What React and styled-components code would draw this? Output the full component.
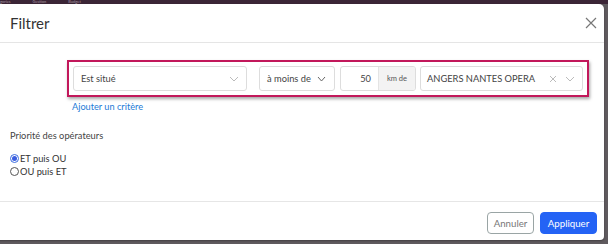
import React from "react";
import styled, { createGlobalStyle } from "styled-components";

const Global = createGlobalStyle`
  html, body { margin: 0; padding: 0; }
  body {
    width: 608px; height: 244px; overflow: hidden;
    background: #5f5a5e;
    font-family: Lato, "Open Sans", sans-serif;
  }
`;

const Page = styled.div`
  display: flex;
  flex-direction: column;
  height: 244px;
`;

const TopBar = styled.div`
  height: 4px;
  background: #3b2536;
  display: flex;
  gap: 22px;
  overflow: hidden;
  font-size: 4px;
  line-height: 4px;
  color: #a897a3;
`;

const Modal = styled.div`
  margin-left: -8px;
  width: 612px;
  height: 236px;
  background: #fff;
  border-radius: 0 5px 4px 0;
  display: flex;
  flex-direction: column;
  box-shadow: 0 1px 2px rgba(0, 0, 0, 0.3);
`;

const Header = styled.div`
  height: 38px;
  display: flex;
  align-items: center;
  justify-content: space-between;
  padding: 0 5px 0 18px;
  border-bottom: 1px solid #e5e5e5;
`;

const Title = styled.div`
  font-size: 15px;
  color: #333;
`;

const Close = styled.button`
  border: 0;
  background: none;
  padding: 0;
  width: 16px;
  height: 16px;
  display: flex;
  cursor: pointer;
`;

const Body = styled.div`
  flex: 1;
  padding: 17px 0 0 18px;
  display: flex;
  flex-direction: column;
`;

const Criteria = styled.div`
  margin-left: 57px;
  width: 522px;
  height: 37px;
  box-sizing: border-box;
  border: 2px solid #c2185b;
  box-shadow: 1px 2px 3px rgba(0, 0, 0, 0.35);
  display: flex;
  align-items: center;
  padding: 0 4px;
`;

const Select = styled.div`
  height: 25px;
  box-sizing: border-box;
  width: ${p => p.w}px;
  margin-left: ${p => p.ml || 0}px;
  border: 1px solid #ddd;
  border-radius: 3px;
  display: flex;
  align-items: center;
  padding: 0 ${p => p.pr || 7}px 0 ${p => p.pl || 7}px;
  font-size: 9.3px;
  color: #444;
  background: #fff;
`;

const SelectText = styled.span`
  flex: 1;
  white-space: nowrap;
`;

const Chevron = ({ c = "#aaa", w = 10 }) => (
  <svg width={w} height="6" viewBox={`0 0 ${w} 6`}>
    <path d={`M1 1l${(w - 2) / 2} ${4} ${(w - 2) / 2} -4`} fill="none" stroke={c} strokeWidth="1" />
  </svg>
);

const NumberGroup = styled.div`
  margin-left: 5px;
  width: 76px;
  height: 25px;
  display: flex;
  border: 1px solid #ddd;
  border-radius: 3px;
  overflow: hidden;
  box-sizing: border-box;
`;

const NumberField = styled.div`
  flex: 1;
  padding-right: 7px;
  display: flex;
  align-items: center;
  justify-content: flex-end;
  font-size: 9.3px;
  color: #444;
`;

const Addon = styled.div`
  width: 36px;
  background: #f3f3f3;
  border-left: 1px solid #e4e4e4;
  display: flex;
  align-items: center;
  justify-content: center;
  font-size: 7.5px;
  color: #555;
`;

const Clear = styled.span`
  display: flex;
  margin-right: 8px;
`;

const AddLink = styled.a`
  align-self: flex-start;
  margin: 4px 0 0 62px;
  font-size: 9.2px;
  line-height: 11px;
  color: #1d7ad6;
  text-decoration: none;
`;

const SectionLabel = styled.div`
  margin-top: 18px;
  font-size: 9.3px;
  line-height: 11px;
  color: #444;
`;

const Radios = styled.div`
  margin-top: 11px;
  display: flex;
  flex-direction: column;
`;

const RadioRow = styled.label`
  display: flex;
  align-items: center;
  gap: 1px;
  font-size: 9.3px;
  color: #333;
  height: 13px;
`;

const Dot = styled.span`
  width: 9px;
  height: 9px;
  border-radius: 50%;
  box-sizing: border-box;
  border: 1px solid ${p => (p.on ? "#3b6de0" : "#555")};
  display: flex;
  align-items: center;
  justify-content: center;
  &::after {
    content: "";
    width: 5px;
    height: 5px;
    border-radius: 50%;
    background: ${p => (p.on ? "#3b5ee0" : "transparent")};
  }
`;

const Footer = styled.div`
  height: 39px;
  box-sizing: border-box;
  padding: 3px 7px 0 0;
  border-top: 1px solid #e6e6e6;
  display: flex;
  align-items: center;
  justify-content: flex-end;
  gap: 6px;
`;

const Button = styled.button`
  height: 22px;
  width: ${p => p.w}px;
  padding: 0;
  border-radius: 4px;
  font-family: Lato, sans-serif;
  font-size: 9.7px;
  border: 1px solid ${p => (p.primary ? "#2463f5" : "#9aa5a5")};
  background: ${p => (p.primary ? "#2463f5" : "#fff")};
  color: ${p => (p.primary ? "#fff" : "#777")};
  cursor: pointer;
`;

export default function App() {
  return (
    <Page>
      <Global />
      <TopBar>
        <span>gories</span>
        <span>Gestion</span>
        <span>Budget</span>
      </TopBar>
      <Modal>
        <Header>
          <Title>Filtrer</Title>
          <Close aria-label="close">
            <svg width="16" height="16" viewBox="0 0 16 16">
              <path d="M3 3l10 10M13 3L3 13" stroke="#777" strokeWidth="1.2" />
            </svg>
          </Close>
        </Header>
        <Body>
          <Criteria>
            <Select w={174}>
              <SelectText>Est situé</SelectText>
              <Chevron c="#bbb" />
            </Select>
            <Select w={76} ml={12} pr={8}>
              <SelectText>à moins de</SelectText>
              <Chevron c="#666" w={9} />
            </Select>
            <NumberGroup>
              <NumberField>50</NumberField>
              <Addon>km de</Addon>
            </NumberGroup>
            <Select w={163} ml={4} pl={6}>
              <SelectText>ANGERS NANTES OPERA</SelectText>
              <Clear>
                <svg width="8" height="8" viewBox="0 0 8 8">
                  <path d="M1 1l6 6M7 1L1 7" stroke="#bbb" strokeWidth="1" />
                </svg>
              </Clear>
              <Chevron c="#bbb" />
            </Select>
          </Criteria>
          <AddLink href="#">Ajouter un critère</AddLink>
          <SectionLabel>Priorité des opérateurs</SectionLabel>
          <Radios>
            <RadioRow>
              <Dot on />
              ET puis OU
            </RadioRow>
            <RadioRow>
              <Dot />
              OU puis ET
            </RadioRow>
          </Radios>
        </Body>
        <Footer>
          <Button w={47}>Annuler</Button>
          <Button primary w={57}>Appliquer</Button>
        </Footer>
      </Modal>
    </Page>
  );
}
